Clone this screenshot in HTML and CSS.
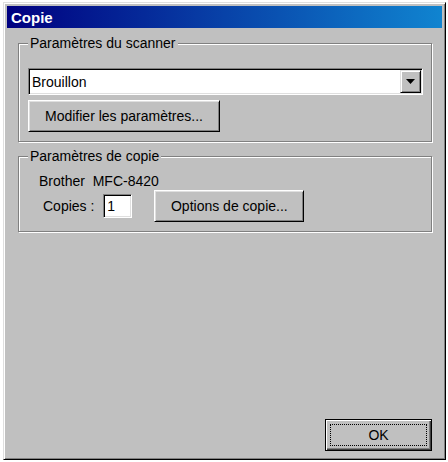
FILE: index.html
```html
<!DOCTYPE html>
<html lang="fr">
<head>
    <meta charset="UTF-8">
    <title>Copie</title>
    <link rel="stylesheet" href="styles.css">
</head>
<body>

    <!-- Dialog window -->
    <div class="window">
        <div class="title-bar">
            <span class="title-text">Copie</span>
        </div>

        <div class="client">
            <!-- Scanner settings -->
            <fieldset class="group">
                <legend>Paramètres du scanner</legend>
                <div class="combo">
                    <span class="combo-value">Brouillon</span>
                    <span class="combo-arrow">
                        <svg width="9" height="5" viewBox="0 0 9 5"><path d="M0 0h9L4.5 5z" fill="#000"/></svg>
                    </span>
                </div>
                <button class="btn btn-settings">Modifier les paramètres...</button>
            </fieldset>

            <!-- Copy settings -->
            <fieldset class="group group-copy">
                <legend>Paramètres de copie</legend>
                <div class="device">Brother&nbsp; MFC-8420</div>
                <div class="copies-row">
                    <label for="copies">Copies :</label>
                    <input type="text" id="copies" class="copies-input" value="1">
                    <button class="btn btn-options">Options de copie...</button>
                </div>
            </fieldset>

            <div class="footer">
                <button class="btn btn-ok"><span class="focus-rect">OK</span></button>
            </div>
        </div>
    </div>

</body>
</html>
```

FILE: styles.css
```css
/* Reset and Global Styles */
* {
    box-sizing: border-box;
}

body {
    margin: 0;
    background-color: #ffffff;
    font-family: "Liberation Sans", Arial, sans-serif;
    font-size: 14px;
    color: #000;
}

/* Window frame */
.window {
    margin: 2px 0 0 3px;
    width: 443px;
    height: 458px;
    padding: 3px;
    background-color: #c0c0c0;
    border: 1px solid;
    border-color: #dfdfdf #000 #000 #dfdfdf;
    box-shadow: inset 1px 1px #fff, inset -1px -1px #808080;
    display: flex;
    flex-direction: column;
}

.title-bar {
    height: 22px;
    padding-left: 4px;
    display: flex;
    align-items: center;
    background: linear-gradient(to right, #000080, #1084d0);
}

.title-text {
    color: #fff;
    font-weight: bold;
    font-size: 15px;
}

.client {
    flex: 1;
    display: flex;
    flex-direction: column;
    padding: 0 10px 5px 11px;
}

/* Group boxes */
.group {
    margin: 7px 0 0;
    padding: 17px 8px 9px 9px;
    min-width: 0;
    border: 1px solid #808080;
    box-shadow: 1px 1px 0 #fff, inset 1px 1px 0 #fff;
}

.group legend {
    padding: 0 2px;
    line-height: 16px;
    background-color: #c0c0c0;
}

.group-copy {
    margin-top: 6px;
    padding-top: 9px;
}

/* Combo box */
.combo {
    height: 27px;
    padding: 1px;
    display: flex;
    align-items: center;
    background-color: #fff;
    border: 1px solid;
    border-color: #808080 #fff #fff #808080;
    box-shadow: inset 1px 1px #000, inset -1px -1px #dfdfdf;
}

.combo-value {
    flex: 1;
    padding-left: 2px;
}

.combo-arrow {
    width: 21px;
    height: 23px;
    display: flex;
    align-items: center;
    justify-content: center;
    background-color: #c0c0c0;
    border: 1px solid;
    border-color: #dfdfdf #000 #000 #dfdfdf;
    box-shadow: inset 1px 1px #fff, inset -1px -1px #808080;
}

/* Buttons */
.btn {
    padding: 0;
    font-family: inherit;
    font-size: 14px;
    color: #000;
    background-color: #c0c0c0;
    border: 1px solid;
    border-color: #fff #000 #000 #fff;
    box-shadow: inset 1px 1px #dfdfdf, inset -1px -1px #808080;
}

.btn-settings {
    display: block;
    margin-top: 5px;
    width: 192px;
    height: 32px;
}

/* Copy settings */
.device {
    margin-left: 11px;
    line-height: 16px;
}

.copies-row {
    margin-top: 1px;
    display: flex;
    align-items: center;
}

.copies-row label {
    margin-left: 15px;
}

.copies-input {
    margin-left: 9px;
    width: 29px;
    height: 24px;
    padding: 0 0 0 3px;
    font-family: inherit;
    font-size: 14px;
    background-color: #fff;
    border: 1px solid;
    border-color: #808080 #fff #fff #808080;
    box-shadow: inset 1px 1px #000, inset -1px -1px #dfdfdf;
    outline: none;
}

.btn-options {
    margin-left: 22px;
    width: 150px;
    height: 32px;
}

/* Footer */
.footer {
    margin-top: auto;
    display: flex;
    justify-content: flex-end;
}

.btn-ok {
    width: 107px;
    height: 32px;
    padding: 4px;
    border: 1px solid #000;
    box-shadow: inset 1px 1px #fff, inset -1px -1px #404040, inset -2px -2px #808080;
}

.focus-rect {
    display: flex;
    height: 100%;
    align-items: center;
    justify-content: center;
    border: 1px dotted #000;
}
```
